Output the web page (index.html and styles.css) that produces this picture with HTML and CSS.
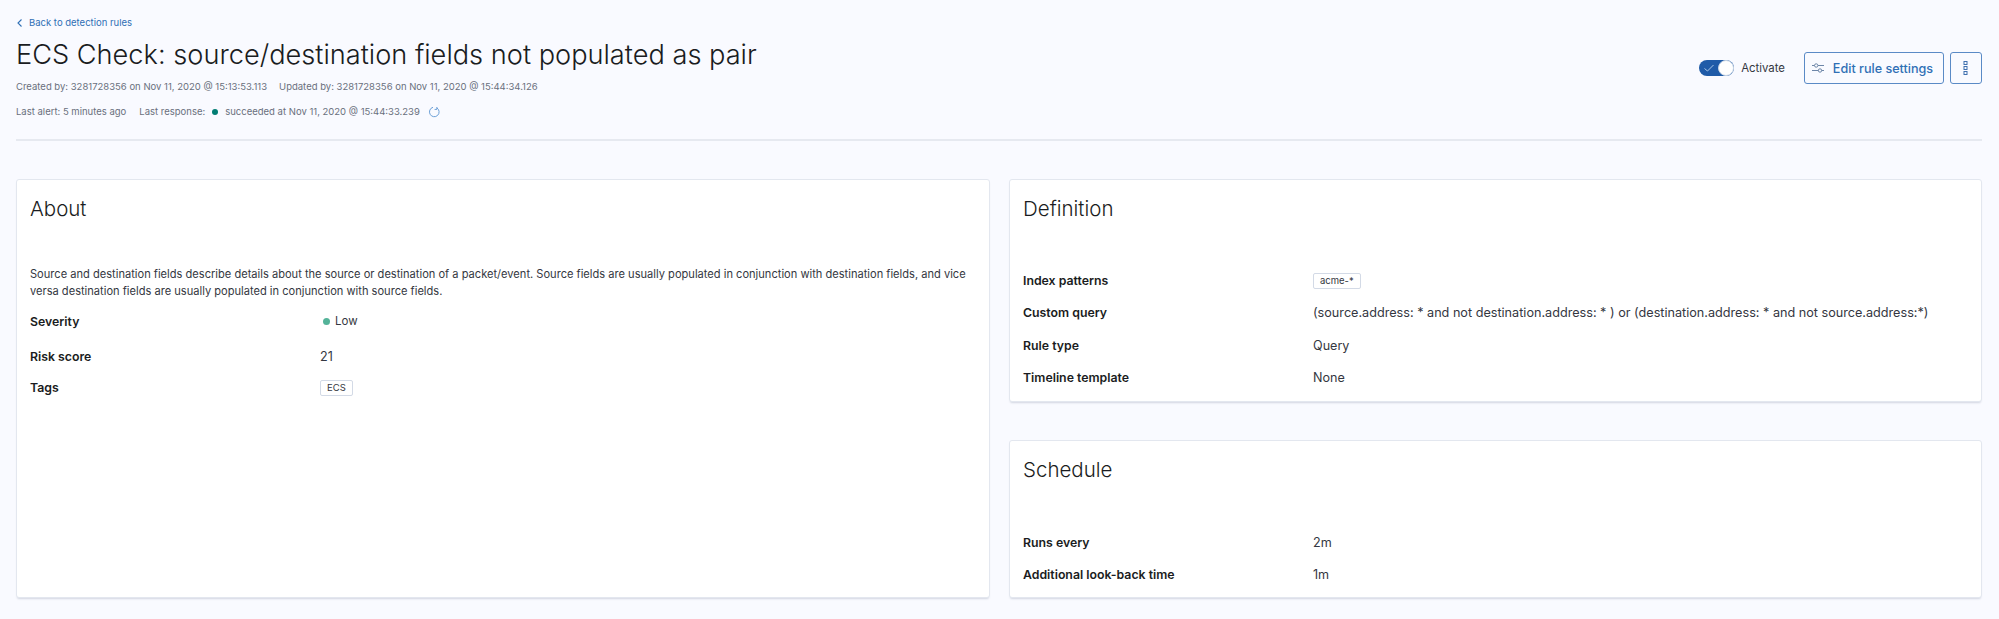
FILE: index.html
```html
<!DOCTYPE html>
<html lang="en">
<head>
<meta charset="utf-8">
<title>ECS Check</title>
<link rel="stylesheet" href="styles.css">
</head>
<body>
<header class="head">
  <div class="head-main">
    <a class="back"><svg class="back-icon" viewBox="0 0 8 10" width="8" height="10"><path d="M5.5 1.5 2 5l3.5 3.5" fill="none" stroke="#2f6fb5" stroke-width="1.1"/></svg>Back to detection rules</a>
    <h1 class="title">ECS Check: source/destination fields not populated as pair</h1>
    <div class="meta meta-one"><span>Created by: 3281728356 on Nov 11, 2020 @ 15:13:53.113</span><span>Updated by: 3281728356 on Nov 11, 2020 @ 15:44:34.126</span></div>
    <div class="meta meta-two"><span>Last alert: 5 minutes ago</span><span class="resp">Last response:<i class="dot dot-ok"></i>succeeded at Nov 11, 2020 @ 15:44:33.239<svg class="refresh" viewBox="0 0 12 12" width="12" height="12"><path d="M8.9 1.9A4.8 4.8 0 1 1 5 1.3M8.9 1v2.4H6.6" fill="none" stroke="#6b9fd6" stroke-width="1"/></svg></span></div>
  </div>
  <div class="actions">
    <div class="switch"><svg class="check" viewBox="0 0 12 10" width="12" height="10"><path d="M1.5 5.5 4.5 8l6-6" fill="none" stroke="#a9c6e8" stroke-width="1"/></svg><span class="knob"></span></div>
    <span class="switch-label">Activate</span>
    <button class="btn btn-edit"><svg viewBox="0 0 14 12" width="14" height="12"><g fill="none" stroke="#6d86a8" stroke-width="1"><path d="M1 3.5h2.5M7 3.5h6M1 8.5h6.5M10.5 8.5H13"/><circle cx="5.2" cy="3.5" r="1.7"/><circle cx="9" cy="8.5" r="1.7"/></g></svg>Edit rule settings</button>
    <button class="btn btn-more"><svg viewBox="0 0 6 14" width="6" height="14"><g fill="none" stroke="#3f6fae" stroke-width="1"><rect x="1" y="0.5" width="3" height="3"/><rect x="1" y="5.5" width="3" height="3"/><rect x="1" y="10.5" width="3" height="3"/></g></svg></button>
  </div>
</header>
<hr class="rule">
<main class="grid">
  <section class="panel panel-about">
    <h2 class="panel-title">About</h2>
    <p class="desc">Source and destination fields describe details about the source or destination of a packet/event. Source fields are usually populated in conjunction with destination fields, and vice versa destination fields are usually populated in conjunction with source fields.</p>
    <dl class="rows rows-about">
      <dt>Severity</dt><dd class="sev"><i class="dot dot-low"></i>Low</dd>
      <dt>Risk score</dt><dd>21</dd>
      <dt>Tags</dt><dd><span class="tag">ECS</span></dd>
    </dl>
  </section>
  <div class="stack">
    <section class="panel panel-def">
      <h2 class="panel-title">Definition</h2>
      <dl class="rows rows-def">
        <dt>Index patterns</dt><dd><span class="tag">acme-*</span></dd>
        <dt>Custom query</dt><dd class="query">(source.address: * and not destination.address: * ) or (destination.address: * and not source.address:*)</dd>
        <dt>Rule type</dt><dd>Query</dd>
        <dt>Timeline template</dt><dd>None</dd>
      </dl>
    </section>
    <section class="panel panel-sched">
      <h2 class="panel-title">Schedule</h2>
      <dl class="rows rows-def">
        <dt>Runs every</dt><dd>2m</dd>
        <dt>Additional look-back time</dt><dd>1m</dd>
      </dl>
    </section>
  </div>
</main>
</body>
</html>
```
FILE: styles.css
```css
* { box-sizing: border-box; }
html, body { height: 100%; }
body {
  margin: 0;
  padding: 16px 17px 0 16px;
  background: #f9faff;
  color: #1a1c21;
  font-family: Inter, "Liberation Sans", sans-serif;
  font-size: 12px;
  overflow: hidden;
}
.head { display: flex; justify-content: space-between; align-items: flex-start; height: 122.5px; }
.back { display: flex; align-items: center; gap: 5px; font-size: 9.5px; line-height: 12px; height: 12px; margin-top: 0.5px; color: #2f6fb5; }
.back-icon { flex: none; }
.title { margin: 10px 0 0; font-size: 27.2px; font-weight: 300; line-height: 32px; color: #1a1c21; }
.meta { display: flex; align-items: center; font-size: 9.5px; line-height: 12px; color: #69707d; }
.meta-one { margin-top: 10.5px; gap: 12px; }
.meta-two { margin-top: 12.5px; gap: 13px; }
.resp { display: flex; align-items: center; }
.refresh { margin-left: 8px; }
.dot { display: inline-block; width: 6px; height: 6px; border-radius: 50%; }
.dot-ok { background: #017d73; margin: 0 7px; }
.dot-low { background: #54b399; width: 7px; height: 7px; margin: 0 5px 0 3px; }
.actions { display: flex; align-items: center; margin-top: 36px; }
.switch { width: 35px; height: 16px; border-radius: 8px; background: #1f5ba8; position: relative; display: flex; align-items: center; padding-left: 4px; margin-right: 7px; }
.knob { position: absolute; right: 0; top: 0; width: 16px; height: 16px; border-radius: 50%; background: #fff; border: 1px solid #c9d6e6; }
.switch-label { font-size: 11.4px; color: #343741; margin-right: 19px; }
.btn { display: flex; align-items: center; justify-content: center; height: 32px; background: transparent; border: 1px solid #5a8ac6; border-radius: 3px; color: #2f6fb5; font-family: inherit; font-size: 12.6px; font-weight: 500; padding: 0 4px 0 0; }
.btn-edit { width: 140px; gap: 8px; margin-right: 6px; }
.btn-more { width: 32px; padding: 0; }
.rule { border: 0; height: 2px; margin: 0; background: #e6e9f0; }
.grid { display: grid; grid-template-columns: 974px 973px; gap: 19px; margin-top: 38px; height: 419px; }
.stack { display: flex; flex-direction: column; gap: 38px; }
.panel { background: #fff; border: 1px solid #e3e7ef; border-radius: 3px; box-shadow: 0 2px 2px -1px rgba(152,162,179,.4); padding: 0 13px; }
.panel-def { height: 223px; }
.panel-sched { flex: 1; }
.panel-title { margin: 15.5px 0 0; font-size: 20.5px; font-weight: 300; line-height: 28px; color: #1a1c21; }
.desc { margin: 43px 0 0; font-size: 11.1px; line-height: 17px; color: #343741; width: 950px; }
.rows { display: grid; grid-template-columns: 290px 1fr; grid-auto-rows: 32.3px; margin: 0; align-items: center; }
.rows-about { grid-template-rows: 37.5px 32px 30.5px; margin-top: 2.5px; }
.rows-def { margin-top: 41.5px; }
.panel-sched .rows-def { margin-top: 42.5px; }
dt { font-size: 12.3px; font-weight: 600; color: #1a1c21; }
dd { margin: 0; font-size: 12.6px; color: #343741; }
.sev { display: flex; align-items: center; font-size: 11.5px; }
.query { white-space: nowrap; font-size: 12.65px; }
.tag { display: inline-block; height: 16px; line-height: 14px; padding: 0 6px; font-size: 9.5px; background: #fff; border: 1px solid #d3dae6; border-radius: 2px; color: #343741; }
```
